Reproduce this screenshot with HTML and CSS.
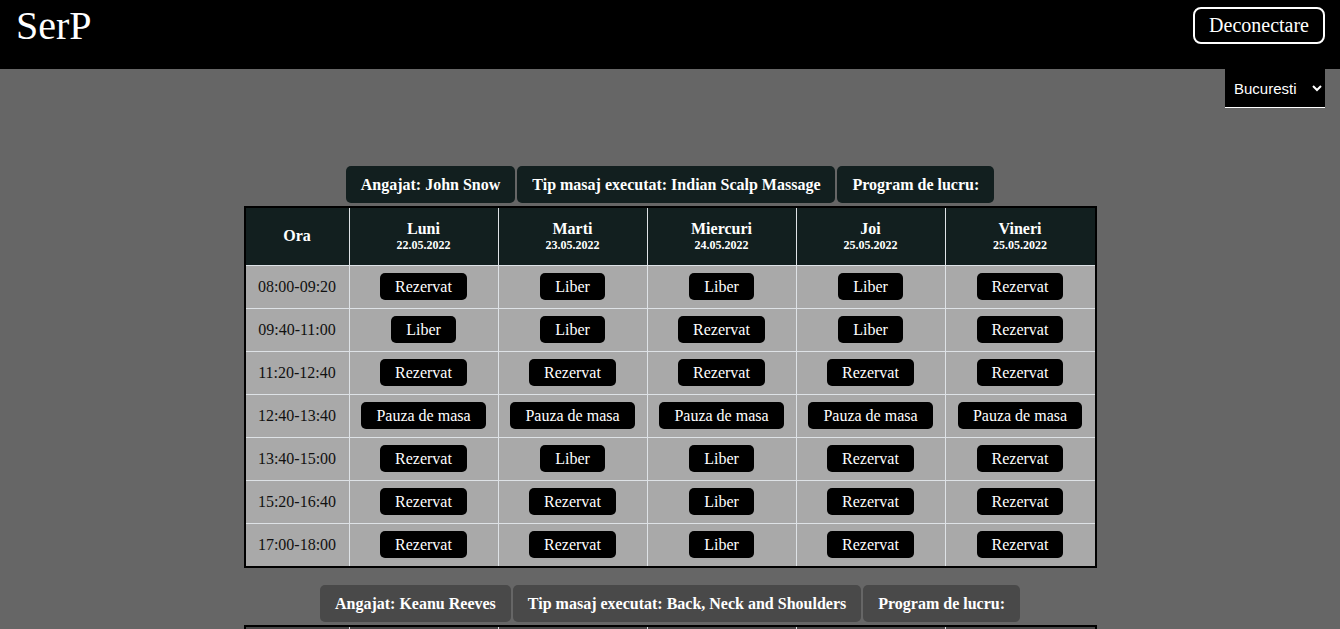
FILE: index.html
```html
<!DOCTYPE html>
<html lang="ro">
<head>
<meta charset="utf-8">
<meta name="viewport" content="width=device-width, initial-scale=1">
<title>SerP</title>
<link rel="stylesheet" href="styles.css">
</head>
<body>
<header class="topbar">
  <a class="brand" href="#">SerP</a>
  <button class="logout" type="button">Deconectare</button>
</header>
<div class="city-bar">
  <select class="city" aria-label="Oras">
    <option selected>Bucuresti</option>
  </select>
</div>
<main class="content">
  <section class="schedule">
    <div class="tags">
      <h2 class="tag">Angajat: John Snow</h2>
      <h2 class="tag">Tip masaj executat: Indian Scalp Massage</h2>
      <h2 class="tag">Program de lucru:</h2>
    </div>
    <table class="grid">
      <thead>
        <tr>
          <th class="hour" scope="col">Ora</th>
          <th scope="col">Luni<span class="date">22.05.2022</span></th>
          <th scope="col">Marti<span class="date">23.05.2022</span></th>
          <th scope="col">Miercuri<span class="date">24.05.2022</span></th>
          <th scope="col">Joi<span class="date">25.05.2022</span></th>
          <th scope="col">Vineri<span class="date">25.05.2022</span></th>
        </tr>
      </thead>
      <tbody>
        <tr>
          <td>08:00-09:20</td>
          <td><button class="slot" type="button">Rezervat</button></td>
          <td><button class="slot" type="button">Liber</button></td>
          <td><button class="slot" type="button">Liber</button></td>
          <td><button class="slot" type="button">Liber</button></td>
          <td><button class="slot" type="button">Rezervat</button></td>
        </tr>
        <tr>
          <td>09:40-11:00</td>
          <td><button class="slot" type="button">Liber</button></td>
          <td><button class="slot" type="button">Liber</button></td>
          <td><button class="slot" type="button">Rezervat</button></td>
          <td><button class="slot" type="button">Liber</button></td>
          <td><button class="slot" type="button">Rezervat</button></td>
        </tr>
        <tr>
          <td>11:20-12:40</td>
          <td><button class="slot" type="button">Rezervat</button></td>
          <td><button class="slot" type="button">Rezervat</button></td>
          <td><button class="slot" type="button">Rezervat</button></td>
          <td><button class="slot" type="button">Rezervat</button></td>
          <td><button class="slot" type="button">Rezervat</button></td>
        </tr>
        <tr>
          <td>12:40-13:40</td>
          <td><button class="slot" type="button">Pauza de masa</button></td>
          <td><button class="slot" type="button">Pauza de masa</button></td>
          <td><button class="slot" type="button">Pauza de masa</button></td>
          <td><button class="slot" type="button">Pauza de masa</button></td>
          <td><button class="slot" type="button">Pauza de masa</button></td>
        </tr>
        <tr>
          <td>13:40-15:00</td>
          <td><button class="slot" type="button">Rezervat</button></td>
          <td><button class="slot" type="button">Liber</button></td>
          <td><button class="slot" type="button">Liber</button></td>
          <td><button class="slot" type="button">Rezervat</button></td>
          <td><button class="slot" type="button">Rezervat</button></td>
        </tr>
        <tr>
          <td>15:20-16:40</td>
          <td><button class="slot" type="button">Rezervat</button></td>
          <td><button class="slot" type="button">Rezervat</button></td>
          <td><button class="slot" type="button">Liber</button></td>
          <td><button class="slot" type="button">Rezervat</button></td>
          <td><button class="slot" type="button">Rezervat</button></td>
        </tr>
        <tr>
          <td>17:00-18:00</td>
          <td><button class="slot" type="button">Rezervat</button></td>
          <td><button class="slot" type="button">Rezervat</button></td>
          <td><button class="slot" type="button">Liber</button></td>
          <td><button class="slot" type="button">Rezervat</button></td>
          <td><button class="slot" type="button">Rezervat</button></td>
        </tr>
      </tbody>
    </table>
  </section>
  <section class="schedule schedule-gray">
    <div class="tags">
      <h2 class="tag">Angajat: Keanu Reeves</h2>
      <h2 class="tag">Tip masaj executat: Back, Neck and Shoulders</h2>
      <h2 class="tag">Program de lucru:</h2>
    </div>
    <table class="grid">
      <thead>
        <tr>
          <th class="hour"></th>
          <th></th>
          <th></th>
          <th></th>
          <th></th>
          <th></th>
        </tr>
      </thead>
    </table>
  </section>
</main>
</body>
</html>
```

FILE: styles.css
```css
* {
  box-sizing: border-box;
}

html {
  scrollbar-width: none;
}

body {
  margin: 0;
  background: #666666;
  color: #ffffff;
  font-family: "Liberation Serif", "Times New Roman", serif;
  font-size: 16px;
  line-height: 18px;
}

.topbar {
  display: flex;
  justify-content: space-between;
  align-items: flex-start;
  padding: 7px 15px 25px 16px;
  background: #000000;
}

.brand {
  color: #ffffff;
  font-size: 40px;
  line-height: 37px;
  text-decoration: none;
}

.logout {
  padding: 5px 14px;
  border: 2px solid #ffffff;
  border-radius: 8px;
  background: #000000;
  color: #ffffff;
  font-family: inherit;
  font-size: 20px;
  line-height: 23px;
}

.city-bar {
  display: flex;
  justify-content: flex-end;
  padding: 0 15px;
}

.city {
  width: 100px;
  height: 39px;
  padding: 0 1px 0 5px;
  border: 0;
  border-bottom: 1px solid #ffffff;
  border-radius: 0;
  background: #000000;
  color: #ffffff;
  font-family: "Liberation Sans", Arial, sans-serif;
  font-size: 15px;
}

.content {
  display: flex;
  flex-direction: column;
  gap: 17px;
  padding-top: 58px;
}

.schedule {
  --head: #121f1f;
  display: flex;
  flex-direction: column;
  align-items: center;
  gap: 3px;
}

.schedule-gray {
  --head: #494949;
}

.tags {
  display: flex;
  gap: 2px;
}

.tag {
  margin: 0;
  padding: 10px 15px 9px;
  border-radius: 5px;
  background: var(--head);
  font-size: 16px;
  line-height: 18px;
}

.grid {
  border: 2px solid #000000;
  border-collapse: separate;
  border-spacing: 0;
  table-layout: fixed;
  width: 853px;
  max-width: 100%;
  background: #a9a9a9;
  text-align: center;
}

.grid th,
.grid td {
  border-right: 1px solid #dee2e6;
  border-bottom: 1px solid #dee2e6;
}

.grid th:last-child,
.grid td:last-child {
  border-right: 0;
}

.grid tbody tr:last-child td {
  border-bottom: 0;
}

.grid th {
  padding: 12px 0 13px;
  background: var(--head);
  line-height: 18px;
}

.grid .hour {
  width: 104px;
}

.grid td {
  padding: 7px 0 8px;
  color: #111111;
}

.date {
  display: block;
  font-size: 12px;
  line-height: 14px;
}

.slot {
  display: block;
  margin: 0 auto;
  padding: 5px 15px 4px;
  border: 0;
  border-radius: 5px;
  background: #000000;
  color: #ffffff;
  font-family: inherit;
  font-size: 16px;
  line-height: 18px;
}
```
